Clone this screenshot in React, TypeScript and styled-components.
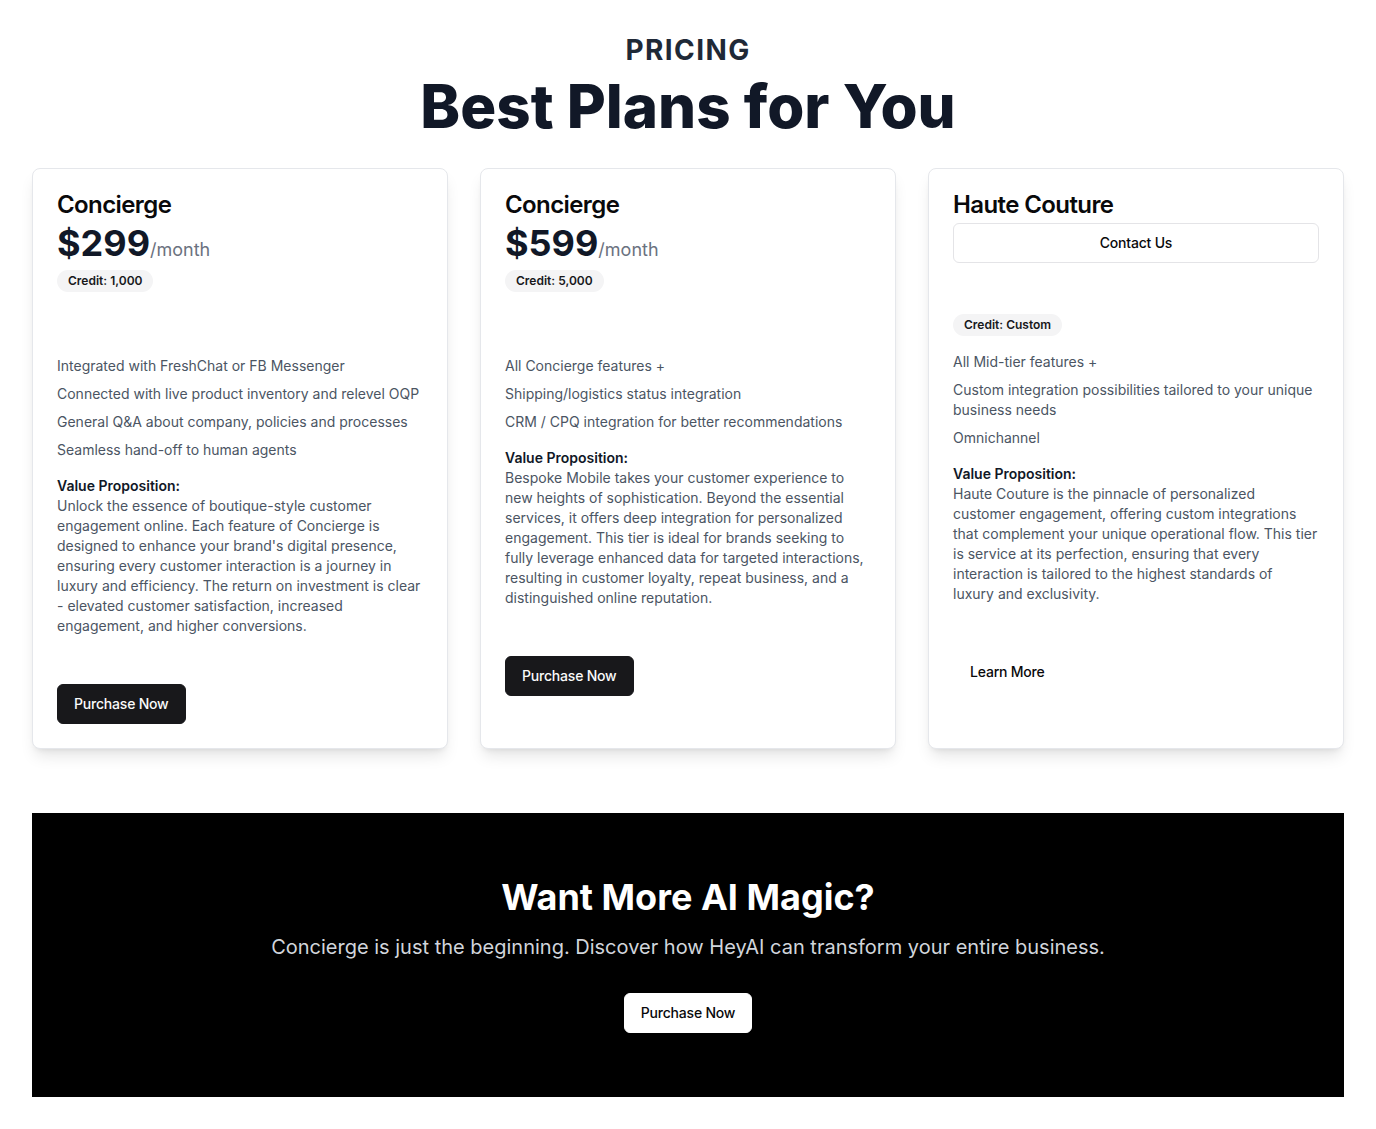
import React from "react";
import styled, { createGlobalStyle } from "styled-components";

const GlobalStyle = createGlobalStyle`
  *, *::before, *::after { box-sizing: border-box; }
  html, body { margin: 0; padding: 0; background: #ffffff; }
  body {
    font-family: Inter, "Noto Sans", "Liberation Sans", sans-serif;
    color: #09090b;
    -webkit-font-smoothing: antialiased;
  }
  p, h1, h2, h3, ul { margin: 0; padding: 0; }
`;

const Page = styled.main`
  padding: 32px 32px 32px;
  display: flex;
  flex-direction: column;
`;

const Header = styled.header`
  display: flex;
  flex-direction: column;
  align-items: center;
  gap: 8px;
`;

const Eyebrow = styled.h2`
  font-size: 28px;
  line-height: 36px;
  font-weight: 700;
  letter-spacing: 1.4px;
  color: #1f2937;
`;

const Heading = styled.h1`
  font-size: 60px;
  line-height: 60px;
  font-weight: 800;
  color: #111827;
`;

const Grid = styled.section`
  margin-top: 32px;
  display: grid;
  grid-template-columns: repeat(3, 1fr);
  gap: 32px;
`;

const Card = styled.article`
  display: flex;
  flex-direction: column;
  align-items: flex-start;
  padding: 24px;
  border: 1px solid #e5e7eb;
  border-radius: 8px;
  background: #ffffff;
  box-shadow: 0 10px 15px -3px rgba(0, 0, 0, 0.1), 0 4px 6px -4px rgba(0, 0, 0, 0.1);
`;

const Title = styled.h3`
  font-size: 24px;
  line-height: 24px;
  font-weight: 600;
  letter-spacing: -0.6px;
  color: #09090b;
`;

const PriceRow = styled.div`
  margin-top: 6px;
  display: flex;
  align-items: baseline;
`;

const Amount = styled.span`
  font-size: 36px;
  line-height: 40px;
  font-weight: 700;
  color: #111827;
`;

const Period = styled.span`
  font-size: 18px;
  line-height: 28px;
  color: #6b7280;
`;

const Badge = styled.span<{ $mt: number }>`
  margin-top: ${(p) => p.$mt}px;
  display: inline-flex;
  align-items: center;
  padding: 2px 10px;
  border: 1px solid transparent;
  border-radius: 9999px;
  background: #f4f4f5;
  color: #18181b;
  font-size: 12px;
  line-height: 16px;
  font-weight: 600;
`;

const FeatureList = styled.ul<{ $mt: number }>`
  margin-top: ${(p) => p.$mt}px;
  list-style: none;
  display: flex;
  flex-direction: column;
  gap: 8px;
`;

const Feature = styled.li`
  font-size: 14px;
  line-height: 20px;
  color: #4b5563;
`;

const ValueProp = styled.div`
  margin-top: 16px;
`;

const ValueTitle = styled.p`
  font-size: 14px;
  line-height: 20px;
  font-weight: 600;
  color: #111827;
`;

const ValueText = styled.p`
  font-size: 14px;
  line-height: 20px;
  color: #4b5563;
`;

const Button = styled.button<{ $variant: "dark" | "outline" | "ghost" | "light"; $full?: boolean; $mt?: number }>`
  margin-top: ${(p) => p.$mt ?? 0}px;
  height: 40px;
  width: ${(p) => (p.$full ? "100%" : "auto")};
  padding: 0 16px;
  border-radius: 6px;
  font-family: inherit;
  font-size: 14px;
  line-height: 20px;
  font-weight: 500;
  letter-spacing: -0.2px;
  cursor: pointer;
  display: inline-flex;
  align-items: center;
  justify-content: center;
  border: 1px solid
    ${(p) => (p.$variant === "outline" ? "#e4e4e7" : p.$variant === "dark" ? "#18181b" : p.$variant === "light" ? "#ffffff" : "transparent")};
  background: ${(p) => (p.$variant === "dark" ? "#18181b" : p.$variant === "light" ? "#ffffff" : "transparent")};
  color: ${(p) => (p.$variant === "dark" ? "#fafafa" : "#09090b")};
`;

const Banner = styled.section`
  margin-top: 64px;
  background: #000000;
  padding: 64px 32px;
  display: flex;
  flex-direction: column;
  align-items: center;
  text-align: center;
`;

const BannerTitle = styled.h2`
  font-size: 36px;
  line-height: 40px;
  font-weight: 700;
  color: #ffffff;
`;

const BannerText = styled.p`
  margin-top: 16px;
  font-size: 20px;
  line-height: 28px;
  color: #d1d5db;
`;

type Plan = {
  name: string;
  price?: string;
  credit: string;
  features: string[];
  value: string;
  cta: "purchase" | "learn";
};

const plans: Plan[] = [
  {
    name: "Concierge",
    price: "$299",
    credit: "Credit: 1,000",
    features: [
      "Integrated with FreshChat or FB Messenger",
      "Connected with live product inventory and relevel OQP",
      "General Q&A about company, policies and processes",
      "Seamless hand-off to human agents",
    ],
    value:
      "Unlock the essence of boutique-style customer engagement online. Each feature of Concierge is designed to enhance your brand's digital presence, ensuring every customer interaction is a journey in luxury and efficiency. The return on investment is clear - elevated customer satisfaction, increased engagement, and higher conversions.",
    cta: "purchase",
  },
  {
    name: "Concierge",
    price: "$599",
    credit: "Credit: 5,000",
    features: [
      "All Concierge features +",
      "Shipping/logistics status integration",
      "CRM / CPQ integration for better recommendations",
    ],
    value:
      "Bespoke Mobile takes your customer experience to new heights of sophistication. Beyond the essential services, it offers deep integration for personalized engagement. This tier is ideal for brands seeking to fully leverage enhanced data for targeted interactions, resulting in customer loyalty, repeat business, and a distinguished online reputation.",
    cta: "purchase",
  },
  {
    name: "Haute Couture",
    credit: "Credit: Custom",
    features: [
      "All Mid-tier features +",
      "Custom integration possibilities tailored to your unique business needs",
      "Omnichannel",
    ],
    value:
      "Haute Couture is the pinnacle of personalized customer engagement, offering custom integrations that complement your unique operational flow. This tier is service at its perfection, ensuring that every interaction is tailored to the highest standards of luxury\u00a0and exclusivity.",
    cta: "learn",
  },
];

function PlanCard({ plan }: { plan: Plan }) {
  const hasPrice = Boolean(plan.price);
  return (
    <Card>
      <Title>{plan.name}</Title>
      {hasPrice ? (
        <PriceRow>
          <Amount>{plan.price}</Amount>
          <Period>/month</Period>
        </PriceRow>
      ) : (
        <Button $variant="outline" $full $mt={6}>
          Contact Us
        </Button>
      )}
      <Badge $mt={hasPrice ? 6 : 51}>{plan.credit}</Badge>
      <FeatureList $mt={hasPrice ? 64 : 16}>
        {plan.features.map((f) => (
          <Feature key={f}>{f}</Feature>
        ))}
      </FeatureList>
      <ValueProp>
        <ValueTitle>Value Proposition:</ValueTitle>
        <ValueText>{plan.value}</ValueText>
      </ValueProp>
      {plan.cta === "purchase" ? (
        <Button $variant="dark" $mt={48}>
          Purchase Now
        </Button>
      ) : (
        <Button $variant="ghost" $mt={48}>
          Learn More
        </Button>
      )}
    </Card>
  );
}

export default function App() {
  return (
    <>
      <GlobalStyle />
      <Page>
        <Header>
          <Eyebrow>PRICING</Eyebrow>
          <Heading>Best Plans for You</Heading>
        </Header>
        <Grid>
          {plans.map((p, i) => (
            <PlanCard key={i} plan={p} />
          ))}
        </Grid>
        <Banner>
          <BannerTitle>Want More AI Magic?</BannerTitle>
          <BannerText>
            Concierge is just the beginning. Discover how HeyAI can transform your entire business.
          </BannerText>
          <Button $variant="light" $mt={32}>
            Purchase Now
          </Button>
        </Banner>
      </Page>
    </>
  );
}
